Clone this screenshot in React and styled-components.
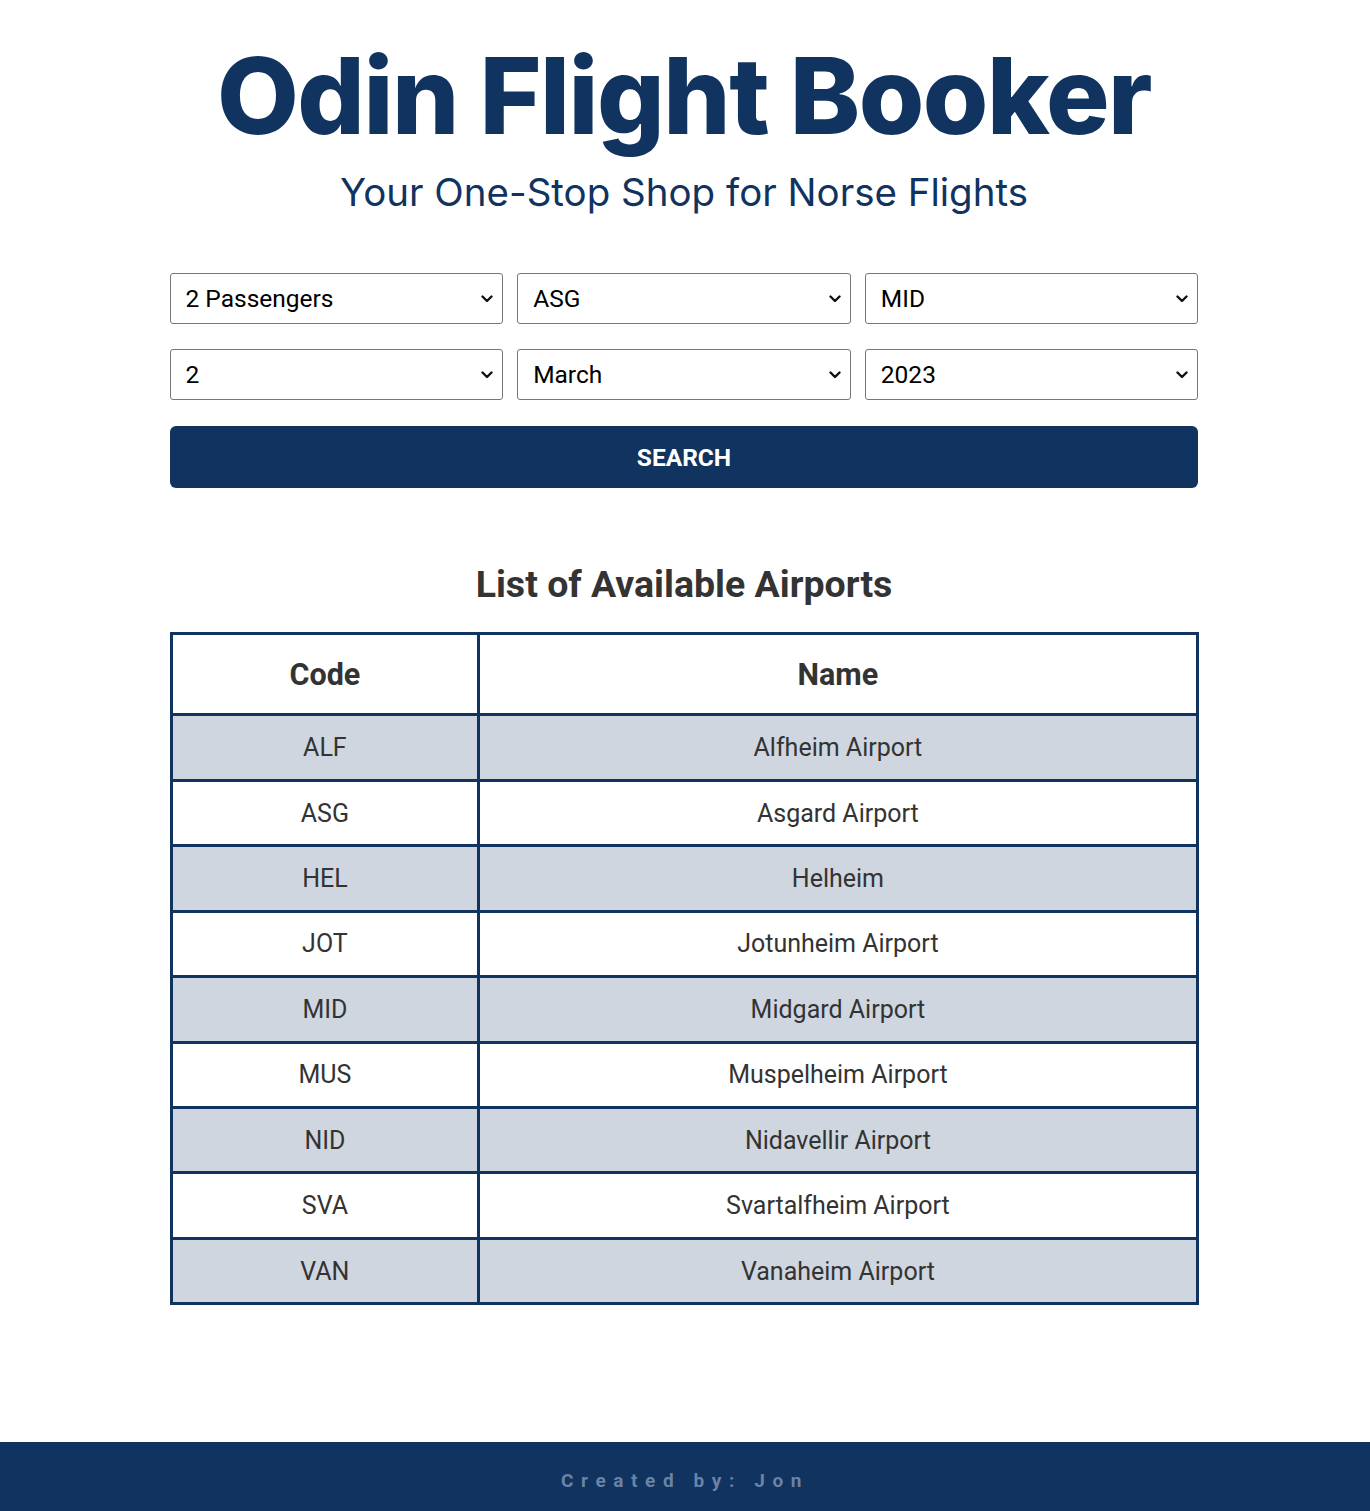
import React from 'react';
import styled, { createGlobalStyle } from 'styled-components';

const airports = [
    { code: 'ALF', name: 'Alfheim Airport' },
    { code: 'ASG', name: 'Asgard Airport' },
    { code: 'HEL', name: 'Helheim' },
    { code: 'JOT', name: 'Jotunheim Airport' },
    { code: 'MID', name: 'Midgard Airport' },
    { code: 'MUS', name: 'Muspelheim Airport' },
    { code: 'NID', name: 'Nidavellir Airport' },
    { code: 'SVA', name: 'Svartalfheim Airport' },
    { code: 'VAN', name: 'Vanaheim Airport' },
];

const chevron = encodeURIComponent(
    '<svg xmlns="http://www.w3.org/2000/svg" width="12" height="8" viewBox="0 0 12 8"><path d="M1.5 1.5l4.5 4.5 4.5-4.5" fill="none" stroke="#111" stroke-width="2.4" stroke-linecap="round" stroke-linejoin="round"/></svg>'
);

function App() {
    return (
        <Page>
            <GlobalStyle />
            <Main>
                <Header>
                    <Title>Odin Flight Booker</Title>
                    <Subtitle>Your One-Stop Shop for Norse Flights</Subtitle>
                </Header>

                <SearchForm onSubmit={(e) => e.preventDefault()}>
                    <Select defaultValue="2">
                        <option value="1">1 Passenger</option>
                        <option value="2">2 Passengers</option>
                        <option value="3">3 Passengers</option>
                        <option value="4">4 Passengers</option>
                    </Select>
                    <Select defaultValue="ASG">
                        {airports.map((a) => <option key={a.code} value={a.code}>{a.code}</option>)}
                    </Select>
                    <Select defaultValue="MID">
                        {airports.map((a) => <option key={a.code} value={a.code}>{a.code}</option>)}
                    </Select>
                    <Select defaultValue="2">
                        {Array.from({ length: 31 }, (_, i) => <option key={i} value={i + 1}>{i + 1}</option>)}
                    </Select>
                    <Select defaultValue="March">
                        {['January', 'February', 'March', 'April', 'May', 'June'].map((m) => <option key={m} value={m}>{m}</option>)}
                    </Select>
                    <Select defaultValue="2023">
                        <option value="2023">2023</option>
                        <option value="2024">2024</option>
                    </Select>
                    <SearchButton type="submit">Search</SearchButton>
                </SearchForm>

                <AirportSection>
                    <SectionTitle>List of Available Airports</SectionTitle>
                    <AirportTable>
                        <thead>
                            <tr>
                                <th className="code-col">Code</th>
                                <th>Name</th>
                            </tr>
                        </thead>
                        <tbody>
                            {airports.map((a) => (
                                <tr key={a.code}>
                                    <td>{a.code}</td>
                                    <td>{a.name}</td>
                                </tr>
                            ))}
                        </tbody>
                    </AirportTable>
                </AirportSection>
            </Main>
            <Footer>Created by: Jon</Footer>
        </Page>
    );
}

const GlobalStyle = createGlobalStyle`
    body {
        margin: 0;
        font-family: Roboto, "Liberation Sans", sans-serif;
        color: #333;
        background: #fff;
    }
`;

const Page = styled.div`
    min-height: 1511px;
    display: flex;
    flex-direction: column;
`;

const Main = styled.main`
    flex: 1;
    width: 1029px;
    margin: 0 auto;
    transform: translateX(-1px);
`;

const Header = styled.header`
    text-align: center;
    color: #10335f;
    padding-top: 32px;
`;

const Title = styled.h1`
    margin: 0;
    font-family: Inter, sans-serif;
    font-weight: 800;
    font-size: 106px;
    line-height: 1.2;
    letter-spacing: -1.5px;
`;

const Subtitle = styled.p`
    margin: 10px 0 0;
    font-family: Inter, sans-serif;
    font-weight: 400;
    font-size: 38.5px;
    line-height: 1.2;
`;

const SearchForm = styled.form`
    margin-top: 58px;
    display: grid;
    grid-template-columns: repeat(3, 1fr);
    column-gap: 14px;
    row-gap: 25px;
`;

const Select = styled.select`
    appearance: none;
    height: 51px;
    padding: 0 36px 0 15px;
    font-family: Roboto, sans-serif;
    font-size: 24.5px;
    color: #000;
    background: #fff url("data:image/svg+xml,${chevron}") no-repeat right 9px center;
    border: 1px solid #767676;
    border-radius: 3px;
`;

const SearchButton = styled.button`
    grid-column: 1 / -1;
    margin-top: 1px;
    height: 62px;
    border: none;
    border-radius: 6px;
    background: #10335f;
    color: #fff;
    font-family: Roboto, sans-serif;
    font-weight: 700;
    font-size: 24.5px;
    text-transform: uppercase;
    cursor: pointer;
`;

const AirportSection = styled.section`
    margin-top: 74px;
`;

const SectionTitle = styled.h2`
    margin: 0 0 26px;
    text-align: center;
    font-size: 37.5px;
    font-weight: 700;
    color: #333;
`;

const AirportTable = styled.table`
    width: 100%;
    border-collapse: collapse;
    border: 3px solid #10335f;
    text-align: center;

    th, td {
        border: 3px solid #10335f;
    }

    th {
        height: 76px;
        font-size: 30.5px;
        font-weight: 700;
        background: #fff;
    }

    .code-col {
        width: 30%;
    }

    td {
        height: 60.45px;
        font-size: 25px;
        color: #333;
    }

    tbody tr:nth-child(odd) {
        background: #cfd6e0;
    }
`;

const Footer = styled.footer`
    height: 69px;
    box-sizing: border-box;
    padding-top: 8px;
    display: flex;
    align-items: center;
    justify-content: center;
    background: #10335f;
    color: #6a83a6;
    font-family: Roboto, sans-serif;
    font-weight: 700;
    font-size: 19px;
    letter-spacing: 0.4em;
`;

export default App;
